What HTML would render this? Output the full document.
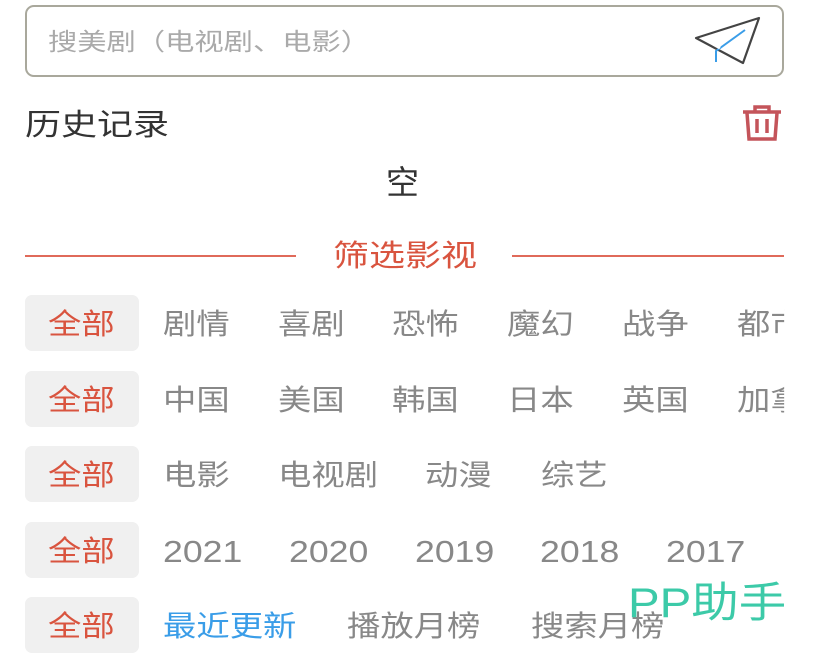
<!DOCTYPE html>
<html><head><meta charset="utf-8"><style>
body{margin:0;width:819px;height:646px;background:#fff;overflow:hidden;position:relative;font-family:"Liberation Sans","Noto Sans CJK SC",sans-serif;}
.a{position:absolute;white-space:nowrap;transform-origin:0 50%;}
.box{position:absolute;left:25px;top:5px;width:755px;height:68px;border:2px solid #a9a89c;border-radius:9px;}
.tag{position:absolute;left:25px;width:114px;height:56px;background:#f0f0f0;border-radius:7px;}
.tag span{position:absolute;left:23px;top:2px;color:#d9543f;font-size:29px;line-height:56px;transform:scaleX(1.15);transform-origin:0 50%;white-space:nowrap;}
.it{position:absolute;font-size:29px;color:#888;line-height:56px;white-space:nowrap;transform:scaleX(1.15);transform-origin:0 50%;margin-top:2px;}
</style></head><body>
<div class="box"></div>
<div class="a" style="left:48px;top:28px;font-size:24px;color:#aaa;line-height:30px;transform:scaleX(1.22)">搜美剧（电视剧、电影）</div>
<svg class="a" style="left:690px;top:12px" width="75" height="60" viewBox="690 12 75 60">
<path d="M759 18 L696 38 L743 63 Z" fill="none" stroke="#444" stroke-width="2.2" stroke-linejoin="round"/>
<path d="M745 30 L716 51 L716 62" fill="none" stroke="#3a9de8" stroke-width="2"/>
<path d="M713 44 L720 48" stroke="#fff" stroke-width="3"/>
</svg>
<div class="a" style="left:25px;top:107px;font-size:30px;color:#333;line-height:38px;transform:scaleX(1.2)">历史记录</div>
<svg class="a" style="left:740px;top:104px" width="44" height="38" viewBox="0 0 44 38">
<path d="M3 8 H41 M15 8 V3 H29 V8 M7 9 L9 35 H35 L37 9 M17 15 V29 M27 15 V29" fill="none" stroke="#c4545a" stroke-width="3.5"/>
</svg>
<div class="a" style="left:386px;top:163px;font-size:33px;color:#333;line-height:40px">空</div>
<div class="a" style="left:25px;top:255px;width:271px;height:2px;background:#e06a5a"></div>
<div class="a" style="left:512px;top:255px;width:272px;height:2px;background:#e06a5a"></div>
<div class="a" style="left:333px;top:238px;font-size:30px;color:#d9543f;line-height:38px;transform:scaleX(1.2)">筛选影视</div>

<div class="tag" style="top:295px"><span>全部</span></div>
<div class="it" style="top:295px;left:163px">剧情</div>
<div class="it" style="top:295px;left:278px">喜剧</div>
<div class="it" style="top:295px;left:392px">恐怖</div>
<div class="it" style="top:295px;left:507px">魔幻</div>
<div class="it" style="top:295px;left:622px">战争</div>
<div class="it" style="top:295px;left:737px;width:41px;overflow:hidden">都市</div>

<div class="tag" style="top:371px"><span>全部</span></div>
<div class="it" style="top:371px;left:163px">中国</div>
<div class="it" style="top:371px;left:278px">美国</div>
<div class="it" style="top:371px;left:392px">韩国</div>
<div class="it" style="top:371px;left:507px">日本</div>
<div class="it" style="top:371px;left:622px">英国</div>
<div class="it" style="top:371px;left:737px;width:41px;overflow:hidden">加拿</div>

<div class="tag" style="top:446px"><span>全部</span></div>
<div class="it" style="top:446px;left:163px">电影</div>
<div class="it" style="top:446px;left:278px">电视剧</div>
<div class="it" style="top:446px;left:425px">动漫</div>
<div class="it" style="top:446px;left:541px">综艺</div>

<div class="tag" style="top:522px"><span>全部</span></div>
<div class="it" style="top:522px;left:163px;font-size:31px">2021</div>
<div class="it" style="top:522px;left:289px;font-size:31px">2020</div>
<div class="it" style="top:522px;left:415px;font-size:31px">2019</div>
<div class="it" style="top:522px;left:540px;font-size:31px">2018</div>
<div class="it" style="top:522px;left:666px;font-size:31px">2017</div>

<div class="tag" style="top:597px"><span>全部</span></div>
<div class="it" style="top:597px;left:163px;color:#3a9de8">最近更新</div>
<div class="it" style="top:597px;left:347px">播放月榜</div>
<div class="it" style="top:597px;left:531px">搜索月榜</div>
<div class="a" style="left:628px;top:579px;font-size:42px;color:#3ccaa8;line-height:48px;transform:scaleX(1.13)">PP助手</div>
</body></html>
